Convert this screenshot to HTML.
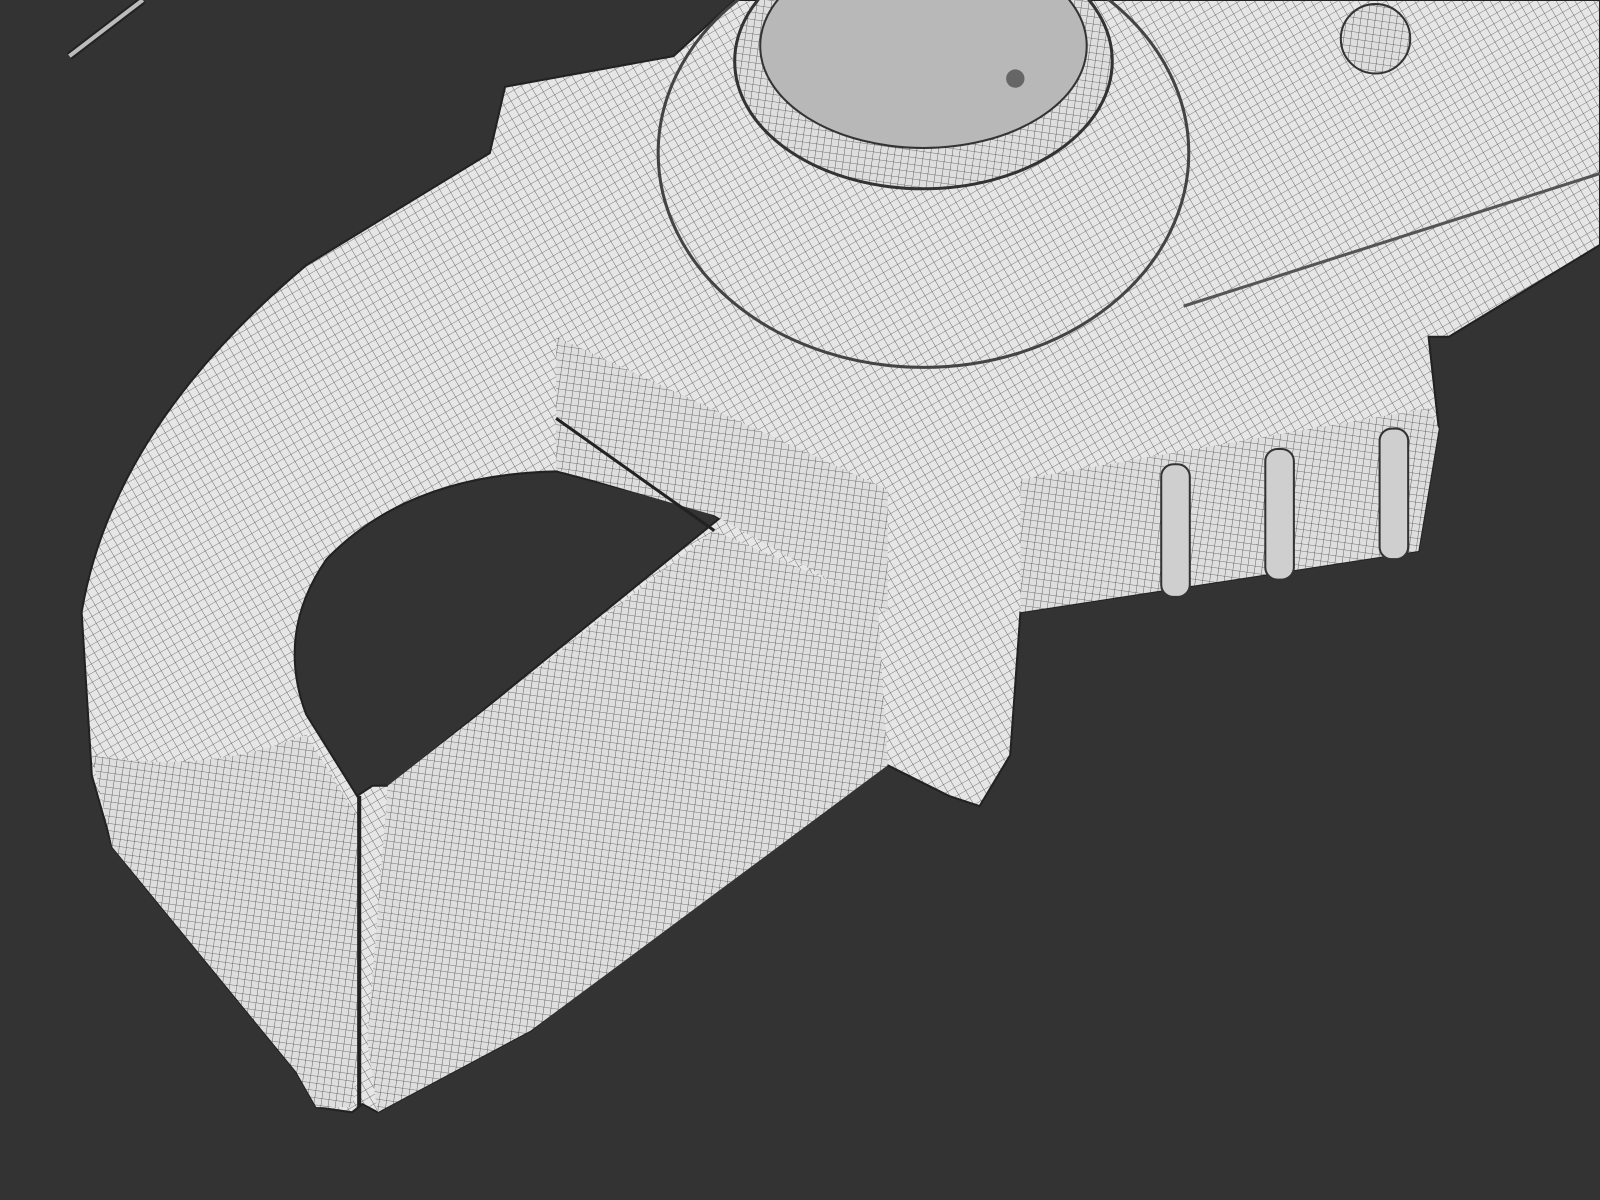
<!DOCTYPE html>
<html><head><meta charset="utf-8"><style>
html,body{margin:0;padding:0;background:#333;}
svg{display:block}
</style></head><body>
<svg width="1600" height="1200" viewBox="0 0 1568 1176" xmlns="http://www.w3.org/2000/svg">
<defs>
<pattern id="m" width="8" height="8" patternUnits="userSpaceOnUse" patternTransform="rotate(-30)">
<rect width="8" height="8" fill="#e6e6e6"/>
<path d="M0 0H8M0 0V8" stroke="#555" stroke-width="0.8"/>
</pattern>
<pattern id="m2" width="7" height="7" patternUnits="userSpaceOnUse" patternTransform="rotate(8)">
<rect width="7" height="7" fill="#dedede"/>
<path d="M0 0H7M0 0V7" stroke="#4a4a4a" stroke-width="0.8"/>
</pattern>
</defs>
<rect width="1568" height="1176" fill="#333"/>
<path d="M68 55 L140 0" stroke="#222" stroke-width="8"/>
<path d="M68 55 L140 0" stroke="#bbb" stroke-width="4"/>
<path fill-rule="evenodd" fill="url(#m)" stroke="#222" stroke-width="2" d="
M495 85 L660 55 L720 0 L1568 0 L1568 240 L1420 330 L1400 330 L1410 420 L1390 540 L1000 600 L990 740 L960 790 L930 780 L870 750 L860 740 L520 1010 L370 1090 L355 1082 L345 1090 L310 1085 L290 1050 L110 830 L90 760 L80 600 Q110 420 300 260 L480 150 Z
M545 462 Q400 465 320 548 Q270 620 300 700 L350 780 L365 770 L382 770 L705 508 L690 500 Z"/>
<path fill="url(#m2)" d="M90 740 L110 830 L290 1050 L310 1085 L345 1085 L350 1050 L350 800 L300 720 Q200 760 90 740 Z"/>
<path fill="url(#m2)" d="M380 770 L700 520 L860 590 L870 750 L520 1010 L370 1090 L360 1020 Z"/>
<path fill="url(#m2)" d="M1000 470 L1400 400 L1410 420 L1390 540 L1000 600 Z"/>
<path fill="url(#m2)" d="M545 330 L870 480 L870 600 L700 505 L545 460 Z"/>
<path d="M352 780 L352 1085" stroke="#222" stroke-width="4"/>
<ellipse cx="905" cy="150" rx="260" ry="210" fill="none" stroke="#444" stroke-width="3"/>
<ellipse cx="905" cy="60" rx="185" ry="125" fill="url(#m2)" stroke="#333" stroke-width="3"/>
<ellipse cx="905" cy="45" rx="160" ry="100" fill="#b8b8b8" stroke="#333" stroke-width="2"/>
<circle cx="995" cy="77" r="9" fill="#666"/>
<circle cx="1348" cy="38" r="34" fill="url(#m2)" stroke="#333" stroke-width="2"/>
<g fill="#cfcfcf" stroke="#333" stroke-width="2">
<rect x="1138" y="455" width="28" height="130" rx="12"/>
<rect x="1240" y="440" width="28" height="128" rx="12"/>
<rect x="1352" y="420" width="28" height="128" rx="12"/>
</g>
<path d="M545 410 L700 520" stroke="#222" stroke-width="3"/>
<path d="M1160 300 L1568 170" stroke="#555" stroke-width="3"/>
</svg>
</body></html>
